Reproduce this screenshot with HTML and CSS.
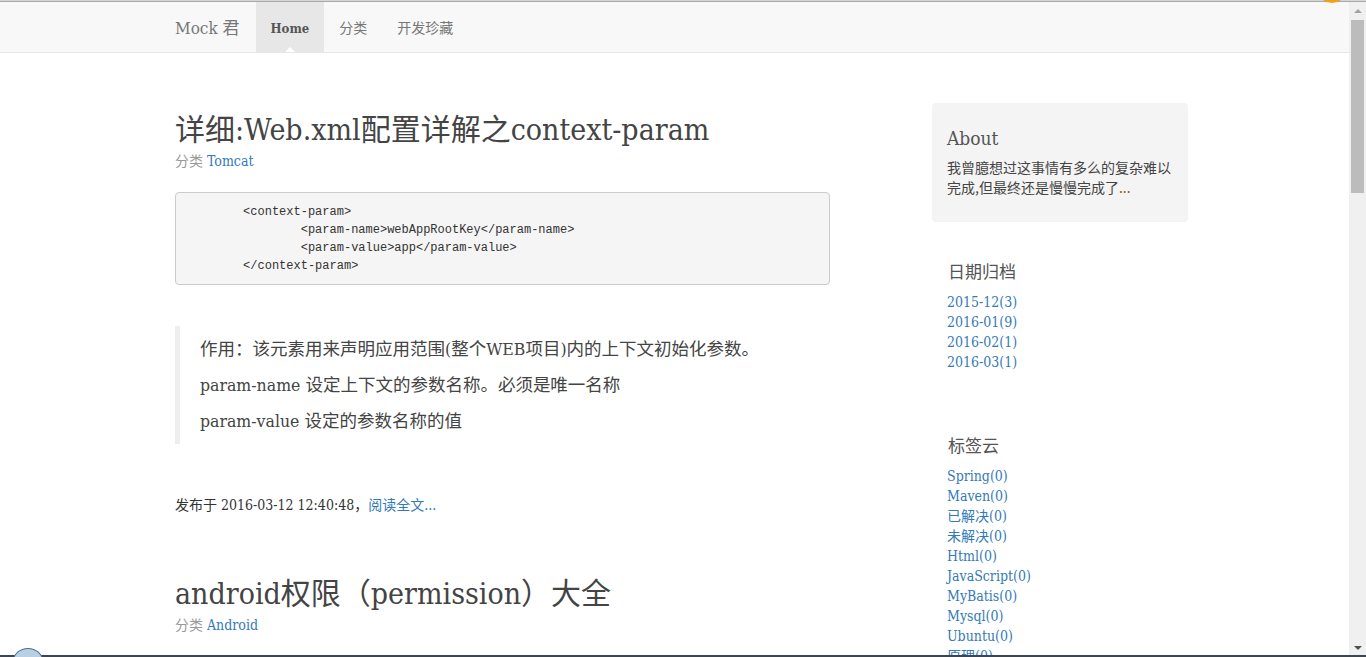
FILE: index.html
```html
<!DOCTYPE html>
<html lang="zh-CN">
<head>
<meta charset="utf-8">
<title>Mock 君</title>
<link rel="stylesheet" href="styles.css">
</head>
<body>
<div class="topline"></div>
<div class="frame">
  <div class="page">
    <nav class="navbar">
      <div class="nav-inner">
        <a class="brand" href="#">Mock 君</a>
        <ul class="nav">
          <li class="active"><a href="#">Home</a><span class="caret-up"></span></li>
          <li><a href="#">分类</a></li>
          <li><a href="#">开发珍藏</a></li>
        </ul>
      </div>
    </nav>
    <div class="layout">
      <main class="main">
        <article class="post">
          <h2 class="post-title">详细:Web.xml配置详解之context-param</h2>
          <div class="post-cat">分类 <a href="#">Tomcat</a></div>
          <pre class="code">	&lt;context-param&gt;
		&lt;param-name&gt;webAppRootKey&lt;/param-name&gt;
		&lt;param-value&gt;app&lt;/param-value&gt;
	&lt;/context-param&gt;</pre>
          <blockquote class="quote">
            <p>作用：该元素用来声明应用范围(整个WEB项目)内的上下文初始化参数。</p>
            <p>param-name 设定上下文的参数名称。必须是唯一名称</p>
            <p>param-value 设定的参数名称的值</p>
          </blockquote>
          <div class="post-meta">发布于 2016-03-12 12:40:48，<a href="#">阅读全文...</a></div>
        </article>
        <article class="post">
          <h2 class="post-title">android权限（permission）大全</h2>
          <div class="post-cat">分类 <a href="#">Android</a></div>
        </article>
      </main>
      <aside class="side">
        <div class="about">
          <h4>About</h4>
          <p>我曾臆想过这事情有多么的复杂难以完成,但最终还是慢慢完成了<a href="#">...</a></p>
        </div>
        <section class="widget">
          <h4>日期归档</h4>
          <ul class="links">
            <li><a href="#">2015-12(3)</a></li>
            <li><a href="#">2016-01(9)</a></li>
            <li><a href="#">2016-02(1)</a></li>
            <li><a href="#">2016-03(1)</a></li>
          </ul>
        </section>
        <section class="widget tags">
          <h4>标签云</h4>
          <ul class="links">
            <li><a href="#">Spring(0)</a></li>
            <li><a href="#">Maven(0)</a></li>
            <li><a href="#">已解决(0)</a></li>
            <li><a href="#">未解决(0)</a></li>
            <li><a href="#">Html(0)</a></li>
            <li><a href="#">JavaScript(0)</a></li>
            <li><a href="#">MyBatis(0)</a></li>
            <li><a href="#">Mysql(0)</a></li>
            <li><a href="#">Ubuntu(0)</a></li>
            <li><a href="#">原理(0)</a></li>
          </ul>
        </section>
      </aside>
    </div>
  </div>
  <div class="scrollbar">
    <div class="sb-btn"><span class="tri-up"></span></div>
    <div class="sb-thumb"></div>
    <div class="sb-track"></div>
    <div class="sb-btn sb-bottom"><span class="tri-down"></span></div>
  </div>
</div>
<div class="taskbar"></div>
<div class="orb-top"></div>
<div class="orb-bottom"></div>
</body>
</html>
```
FILE: styles.css
```css
html, body {
  margin: 0;
  padding: 0;
  height: 657px;
  overflow: hidden;
}
body {
  position: relative;
  display: flex;
  flex-direction: column;
  font-family: "DejaVu Serif", "Noto Sans CJK SC", serif;
  font-stretch: semi-condensed;
  font-size: 14px;
  line-height: 20px;
  color: #333;
  background: #fff;
}
a {
  color: #337ab7;
  text-decoration: none;
}
ul {
  list-style: none;
  margin: 0;
  padding: 0;
}

.topline {
  height: 1px;
  border-top: 1px solid #d6d6d6;
  background: #a9a9a9;
  flex: none;
}
.frame {
  flex: 1;
  display: flex;
  min-height: 0;
}
.page {
  flex: 1;
  overflow: hidden;
  min-width: 0;
}

/* navbar */
.navbar {
  height: 50px;
  background: #f8f8f8;
  border-bottom: 1px solid #e7e7e7;
}
.nav-inner {
  display: flex;
  padding-left: 175px;
  height: 50px;
}
.brand {
  font-size: 17px;
  line-height: 20px;
  padding: 16px 15px 14px 0;
  color: #777;
}
.nav {
  display: flex;
  margin-left: 1px;
}
.nav li {
  position: relative;
}
.nav a {
  display: block;
  padding: 15px 15px;
  line-height: 20px;
  font-size: 14px;
  color: #777;
  font-family: "Noto Sans CJK SC", sans-serif;
}
.nav li.active a {
  padding: 17px 15px 13px;
  background: #e7e7e7;
  color: #555;
  font-family: "DejaVu Serif", serif;
  font-weight: bold;
  font-size: 13px;
}
.caret-up {
  position: absolute;
  left: 50%;
  bottom: 0;
  margin-left: -5px;
  width: 0;
  height: 0;
  border-left: 5px solid transparent;
  border-right: 5px solid transparent;
  border-bottom: 5px solid #fff;
}

/* layout */
.layout {
  display: grid;
  grid-template-columns: 655px 256px;
  column-gap: 102px;
  padding-left: 175px;
  padding-top: 50px;
}

/* posts */
.post-title {
  font-size: 30px;
  line-height: 33px;
  font-weight: normal;
  color: #444;
  margin: 10px 0 5px;
  white-space: nowrap;
}
.post-cat {
  color: #999;
  font-size: 14px;
}
.post-cat a {
  color: #337ab7;
}
.code {
  margin: 21px 0 0;
  padding: 9.5px;
  background: #f5f5f5;
  border: 1px solid #ccc;
  border-radius: 4px;
  font-family: "Liberation Mono", "DejaVu Sans Mono", monospace;
  font-size: 12px;
  line-height: 18px;
  color: #333;
  tab-size: 8;
  -moz-tab-size: 8;
  white-space: pre;
}
.quote {
  margin: 41px 0 0;
  padding: 10px 20px;
  border-left: 5px solid #eee;
  font-size: 17.5px;
  color: #444;
}
.quote p {
  margin: 0 0 10px;
  line-height: 26px;
}
.quote p:last-child {
  margin-bottom: 0;
}
.post-meta {
  margin-top: 51px;
  color: #333;
}
.post + .post {
  margin-top: 62px;
}

/* sidebar */
.about {
  background: #f4f4f4;
  border-radius: 4px;
  padding: 15px;
}
.about h4 {
  font-size: 19px;
  line-height: 22px;
  font-weight: normal;
  color: #555;
  margin: 9px 0 8px;
}
.about p {
  margin: 0 0 10px;
  font-family: "Noto Sans CJK SC", sans-serif;
  font-size: 14px;
  line-height: 20px;
  color: #444;
}
.about p a {
  color: #8a5a2a;
}
.widget {
  padding: 0 15px;
  margin-top: 39px;
}
.widget.tags {
  margin-top: 63px;
}
.widget h4 {
  font-size: 17px;
  line-height: 20px;
  font-weight: normal;
  color: #555;
  margin: 0 0 11px 1px;
  font-family: "Noto Sans CJK SC", sans-serif;
}
.links li {
  line-height: 20px;
  font-size: 14px;
}

/* fake window scrollbar */
.scrollbar {
  width: 17px;
  flex: none;
  background: #f0f0f0;
  display: flex;
  flex-direction: column;
  align-items: center;
}
.sb-btn {
  height: 17px;
  width: 17px;
  display: flex;
  align-items: center;
  justify-content: center;
  flex: none;
}
.sb-bottom {
  height: 14px;
}
.tri-up {
  width: 0;
  height: 0;
  border-left: 4px solid transparent;
  border-right: 4px solid transparent;
  border-bottom: 4px solid #a3a3a3;
}
.tri-down {
  width: 0;
  height: 0;
  border-left: 4px solid transparent;
  border-right: 4px solid transparent;
  border-top: 4px solid #505050;
}
.sb-thumb {
  width: 13px;
  height: 173px;
  background: #bcbcbc;
  margin-top: 1px;
  flex: none;
}
.sb-track {
  flex: 1;
}
.taskbar {
  height: 2px;
  flex: none;
  background: #3c4650;
}
.orb-top {
  position: absolute;
  left: 1318px;
  top: -22px;
  width: 28px;
  height: 25px;
  border-radius: 50%;
  background: #eea21a;
}
.orb-bottom {
  position: absolute;
  left: 13px;
  top: 648px;
  width: 28px;
  height: 24px;
  border-radius: 50%;
  background: #b9d0e4;
  border: 1px solid #4c6f93;
}
```
